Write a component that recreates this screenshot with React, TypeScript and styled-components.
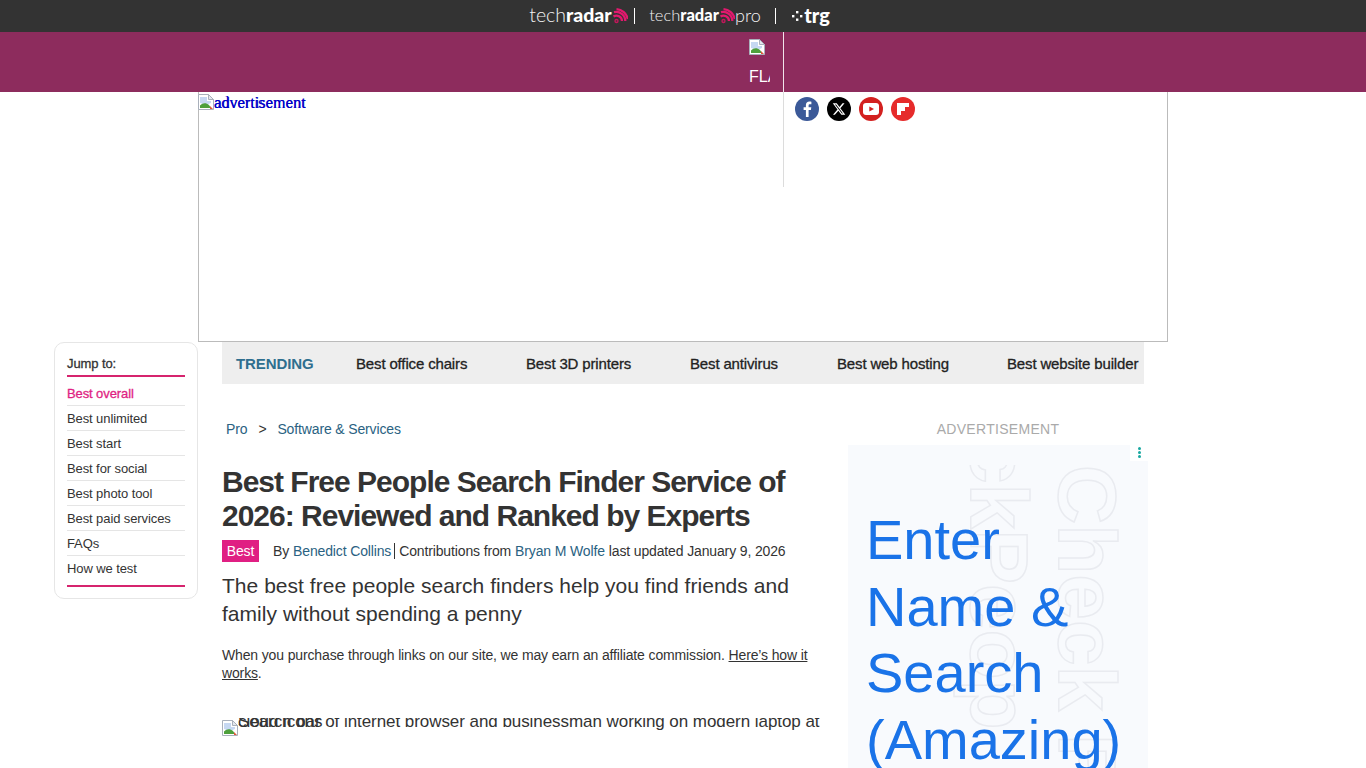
import React from 'react';
import styled, { createGlobalStyle } from 'styled-components';

const GlobalStyle = createGlobalStyle`
	html, body {
		margin: 0;
		padding: 0;
		height: 768px;
		overflow: hidden;
		background: #fff;
		font-family: 'Liberation Sans', Arial, sans-serif;
	}
	* {
		box-sizing: border-box;
	}
`;

const NetworkBar = styled.div`
	height: 32px;
	background: #333;
	display: flex;
	align-items: center;
	justify-content: center;
	padding-left: 8px;
`;

const NetworkItem = styled.div<{ $divider?: boolean; $width: number; $pad?: number }>`
	width: ${(p) => p.$width}px;
	height: 16px;
	display: flex;
	align-items: center;
	justify-content: center;
	padding-right: ${(p) => p.$pad ?? 0}px;
	border-right: ${(p) => (p.$divider ? '1px solid #fff' : 'none')};
	color: #fff;
`;

const LogoWord = styled.span<{ $size: number }>`
	font-family: Lato, 'Open Sans', sans-serif;
	font-size: ${(p) => p.$size}px;
	font-weight: 300;
	line-height: 14px;
	padding-bottom: 2px;
	color: #f4f4f4;
`;

const LogoBold = styled.b`
	font-weight: 900;
	color: #fff;
`;

const BrandBar = styled.div`
	height: 60px;
	background: #8d2c5d;
	display: flex;
	justify-content: flex-start;
	padding-left: 749px;
`;

const BrandMark = styled.div`
	width: 21px;
	overflow: hidden;
	padding-top: 7px;
	color: #fff;
	font-size: 16px;
	line-height: 18px;
	white-space: nowrap;
`;

const BrandAlt = styled.div`
	margin-top: 9px;
`;

const AdBox = styled.div`
	position: relative;
	width: 970px;
	height: 250px;
	margin-left: 198px;
	border: 1px solid #bbb;
	border-top: none;
`;

const AdAlt = styled.div`
	position: absolute;
	left: -1px;
	top: 2px;
	display: flex;
	font-family: 'Liberation Serif', serif;
	font-size: 16px;
	line-height: 18px;
	color: #0000c8;
`;

const AdAltGhost = styled.span<{ $sans?: boolean }>`
	position: absolute;
	left: 16px;
	top: 0;
	font-family: ${(p) => (p.$sans ? "'Liberation Sans', sans-serif" : 'inherit')};
	font-size: ${(p) => (p.$sans ? 14 : 16)}px;
	letter-spacing: ${(p) => (p.$sans ? 0.3 : 0.15)}px;
`;

const MenuDivider = styled.div`
	position: absolute;
	left: 584px;
	top: -60px;
	width: 1px;
	height: 155px;
	background: linear-gradient(#f1e4ea 0 60px, #dcdcdc 60px);
`;

const SocialRow = styled.div`
	position: absolute;
	left: 596px;
	top: 5px;
	display: flex;
	gap: 8px;
`;

const SocialLink = styled.a<{ $bg: string }>`
	width: 24px;
	height: 24px;
	border-radius: 50%;
	background: ${(p) => p.$bg};
	display: flex;
	align-items: center;
	justify-content: center;
`;

const PageRow = styled.div`
	display: flex;
	gap: 24px;
	margin-left: 54px;
	align-items: flex-start;
`;

const JumpCard = styled.nav`
	width: 144px;
	height: 257px;
	flex: none;
	border: 1px solid #e6e6e6;
	border-radius: 10px;
	padding: 12px 12px 0;
	font-size: 13px;
	letter-spacing: -0.1px;
	color: #333;
`;

const JumpTitle = styled.div`
	height: 22px;
	line-height: 18px;
	-webkit-text-stroke: 0.3px #333;
	border-bottom: 2px solid #d6246e;
`;

const JumpItem = styled.a<{ $active?: boolean; $last?: boolean }>`
	display: block;
	height: ${(p) => (p.$last ? 29 : 25)}px;
	line-height: 26px;
	color: ${(p) => (p.$active ? '#e01f83' : '#333')};
	-webkit-text-stroke: ${(p) => (p.$active ? '0.3px #e01f83' : '0')};
	border-bottom: ${(p) => (p.$last ? 'none' : '1px solid #e5e5e5')};
	&:first-of-type {
		height: 29px;
		padding-top: 4px;
	}
`;

const JumpFoot = styled.div`
	height: 2px;
	background: #d6246e;
`;

const Content = styled.div`
	width: 926px;
	flex: none;
`;

const Trending = styled.div`
	width: 922px;
	height: 42px;
	background: #eee;
	display: flex;
	align-items: center;
	padding: 1px 0 0 14px;
	font-size: 15px;
	white-space: nowrap;
	overflow: hidden;
`;

const TrendingLabel = styled.span`
	width: 120px;
	flex: none;
	font-weight: 700;
	letter-spacing: -0.1px;
	color: #2f6f8f;
`;

const TrendingLink = styled.a<{ $width: number }>`
	width: ${(p) => p.$width}px;
	flex: none;
	color: #222;
	letter-spacing: -0.15px;
	-webkit-text-stroke: 0.3px #222;
`;

const Columns = styled.div`
	display: flex;
	gap: 28px;
	padding-top: 36px;
`;

const Article = styled.article`
	width: 598px;
	flex: none;
	color: #333;
`;

const Crumbs = styled.div`
	display: flex;
	gap: 11px;
	padding-left: 4px;
	font-size: 14px;
	line-height: 18px;
	letter-spacing: -0.14px;
`;

const CrumbLink = styled.a`
	color: #2a6282;
`;

const Title = styled.h1`
	margin: 27px 0 0;
	font-size: 30px;
	line-height: 34px;
	font-weight: 700;
	letter-spacing: -1px;
	color: #333;
`;

const Byline = styled.div`
	display: flex;
	align-items: center;
	margin-top: 7px;
	height: 22px;
	font-size: 14px;
	letter-spacing: -0.14px;
	white-space: nowrap;
`;

const Badge = styled.span`
	width: 37px;
	height: 22px;
	background: #e01f83;
	color: #fff;
	text-align: center;
	line-height: 22px;
	margin-right: 14px;
`;

const AuthorLink = styled.a`
	color: #2a6282;
	margin-left: 4px;
`;

const Contrib = styled.span`
	margin-left: 3px;
	padding-left: 4px;
	border-left: 1px solid #333;
	line-height: 16px;
`;

const Updated = styled.span`
	margin-left: 4px;
`;

const Strapline = styled.p`
	margin: 10px 0 0;
	font-size: 21px;
	line-height: 28px;
	letter-spacing: 0.03px;
	color: #333;
`;

const Affiliate = styled.p`
	margin: 18px 0 0;
	font-size: 14px;
	line-height: 18px;
	letter-spacing: -0.14px;
	color: #333;
`;

const AffiliateLink = styled.a`
	color: #333;
	text-decoration: underline;
`;

const Hero = styled.div`
	position: relative;
	height: 50px;
	margin-top: 36px;
	padding-top: 2px;
	font-size: 17px;
	line-height: 20px;
	letter-spacing: -0.06px;
	white-space: nowrap;
	overflow: hidden;
`;

const HeroAlt = styled.span`
	position: absolute;
	left: 16px;
	top: -6px;
`;

const Aside = styled.aside`
	width: 300px;
	flex: none;
`;

const AdLabel = styled.div`
	height: 16px;
	margin-top: 1px;
	line-height: 16px;
	text-align: center;
	font-size: 14px;
	letter-spacing: 0.3px;
	color: #aaa;
`;

const SideAd = styled.div`
	position: relative;
	height: 323px;
	margin-top: 8px;
	background: #f8fafd;
	overflow: hidden;
	padding: 62px 0 0 18px;
`;

const AdMenu = styled.div`
	position: absolute;
	right: 0;
	top: 0;
	width: 18px;
	height: 16px;
	padding-bottom: 2px;
	background: #fff;
	display: flex;
	flex-direction: column;
	align-items: center;
	justify-content: center;
	gap: 1px;
`;

const AdMenuDot = styled.i`
	width: 3px;
	height: 3px;
	border-radius: 50%;
	background: #17a8a0;
`;

const GhostLayer = styled.div`
	position: absolute;
	inset: 20px 0 0;
	overflow: hidden;
`;

const GhostText = styled.div<{ $left: number; $top: number }>`
	position: absolute;
	left: ${(p) => p.$left}px;
	top: ${(p) => p.$top}px;
	transform-origin: 0 0;
	transform: rotate(90deg);
	font-size: 82px;
	line-height: 82px;
	font-weight: 700;
	white-space: nowrap;
	color: transparent;
	-webkit-text-stroke: 1.5px #e9ebf0;
`;

const AdHeadline = styled.div`
	position: relative;
	font-size: 56px;
	line-height: 66.5px;
	color: #1a73e8;
	width: 270px;
`;

const BrokenImage: React.FC = () => (
	<svg width="16" height="16" viewBox="0 0 16 16" style={{ flex: 'none' }}>
		<path d="M0.5 0.5H10.5L15.5 5.5V15.5H0.5Z" fill="#fff" stroke="#a9b0bb" />
		<path d="M10.5 0.5V5.5H15.5Z" fill="#e4e8ee" stroke="#a9b0bb" />
		<path d="M2 3H9V7H13V9L8 11L2 9Z" fill="#c6d8f2" />
		<path d="M2 14V11.5C5 8.5 8 8.5 11 11L13 14Z" fill="#4ea03c" />
		<path d="M12 12L15 15H12Z" fill="#dd5a3c" />
	</svg>
);

const Arcs: React.FC<{ size: number }> = ({ size }) => (
	<svg width={size} height={size} viewBox="0 0 16 16" fill="none" stroke="#e2196e" strokeWidth="2.3" style={{ flex: 'none' }}>
		<circle cx="4.500" cy="13" r="1.500" strokeWidth="1.400" stroke="#c2185b" />
		<path d="M1.500 8.500A5.500 5.500 0 0 1 10 13" />
		<path d="M2 4.200A9 9 0 0 1 13.300 13" />
		<path d="M4.500 1.200A12.500 12.500 0 0 1 15.800 11" />
	</svg>
);

const jumpLinks = [
	'Best overall',
	'Best unlimited',
	'Best start',
	'Best for social',
	'Best photo tool',
	'Best paid services',
	'FAQs',
	'How we test',
];

const trending = [
	{ label: 'Best office chairs', width: 170 },
	{ label: 'Best 3D printers', width: 164 },
	{ label: 'Best antivirus', width: 147 },
	{ label: 'Best web hosting', width: 170 },
	{ label: 'Best website builder', width: 150 },
];

const App: React.FC = () => (
	<>
		<GlobalStyle />
		<NetworkBar>
			<NetworkItem $width={107} $divider $pad={5}>
				<LogoWord $size={19.5}>
					tech<LogoBold>radar</LogoBold>
				</LogoWord>
				<Arcs size={16} />
			</NetworkItem>
			<NetworkItem $width={141} $divider>
				<LogoWord $size={16.5}>
					tech<LogoBold>radar</LogoBold>
				</LogoWord>
				<Arcs size={16} />
				<LogoWord $size={18}>pro</LogoWord>
			</NetworkItem>
			<NetworkItem $width={70}>
				<svg width="12" height="10" viewBox="0 0 12 10" fill="#fff">
					<rect x="0" y="4" width="2.400" height="2.400" />
					<rect x="4" y="0" width="2.400" height="2.400" />
					<rect x="8" y="4" width="2.400" height="2.400" />
					<rect x="4" y="7.500" width="2.400" height="2.400" />
				</svg>
				<LogoWord $size={20}>
					<LogoBold>trg</LogoBold>
				</LogoWord>
			</NetworkItem>
		</NetworkBar>
		<BrandBar>
			<BrandMark>
				<BrokenImage />
				<BrandAlt>FLAG</BrandAlt>
			</BrandMark>
		</BrandBar>
		<AdBox>
			<AdAlt>
				<BrokenImage />
				<AdAltGhost>advertisement</AdAltGhost>
				<AdAltGhost $sans>advertisement</AdAltGhost>
			</AdAlt>
			<MenuDivider />
			<SocialRow>
				<SocialLink $bg="#3b5998">
					<svg width="14" height="16" viewBox="0 0 14 16" fill="#fff">
						<path d="M8.600 16V9h2.300l.4-2.800H8.600V4.500c0-.8.3-1.300 1.400-1.300h1.400V.7C11.100.6 10.300.5 9.400.5 7.300.5 5.900 1.800 5.900 4.100v2.100H3.600V9h2.300v7z" />
					</svg>
				</SocialLink>
				<SocialLink $bg="#000">
					<svg width="14" height="14" viewBox="0 0 24 24" fill="#fff">
						<path d="M18.200 2.300h3.300l-7.200 8.200 8.500 11.200h-6.700l-5.200-6.800-6 6.800H1.700l7.700-8.800L1.300 2.300h6.800l4.700 6.200zm-1.200 17.500h1.800L7 4.100H5z" />
					</svg>
				</SocialLink>
				<SocialLink $bg="#d3201f">
					<svg width="16" height="12" viewBox="0 0 16 12">
						<rect width="16" height="12" rx="3" fill="#fff" />
						<path d="M6.300 3.400L11 6 6.300 8.600z" fill="#d3201f" />
					</svg>
				</SocialLink>
				<SocialLink $bg="#e62b2b">
					<svg width="12" height="12" viewBox="0 0 12 12" fill="#fff">
						<path d="M0 0H12V4H8V8H4V12H0Z" />
					</svg>
				</SocialLink>
			</SocialRow>
		</AdBox>
		<PageRow>
			<JumpCard>
				<JumpTitle>Jump to:</JumpTitle>
				{jumpLinks.map((link, i) => (
					<JumpItem key={link} $active={i === 0} $last={i === jumpLinks.length - 1}>
						{link}
					</JumpItem>
				))}
				<JumpFoot />
			</JumpCard>
			<Content>
				<Trending>
					<TrendingLabel>TRENDING</TrendingLabel>
					{trending.map((item) => (
						<TrendingLink key={item.label} $width={item.width}>
							{item.label}
						</TrendingLink>
					))}
				</Trending>
				<Columns>
					<Article>
						<Crumbs>
							<CrumbLink>Pro</CrumbLink>
							<span>&gt;</span>
							<CrumbLink>Software &amp; Services</CrumbLink>
						</Crumbs>
						<Title>Best Free People Search Finder Service of 2026: Reviewed and Ranked by Experts</Title>
						<Byline>
							<Badge>Best</Badge>
							By
							<AuthorLink>Benedict Collins</AuthorLink>
							<Contrib>Contributions from</Contrib>
							<AuthorLink>Bryan M Wolfe</AuthorLink>
							<Updated>last updated January 9, 2026</Updated>
						</Byline>
						<Strapline>The best free people search finders help you find friends and family without spending a penny</Strapline>
						<Affiliate>
							When you purchase through links on our site, we may earn an affiliate commission.{' '}
							<AffiliateLink>Here’s how it works</AffiliateLink>.
						</Affiliate>
						<Hero>
							<BrokenImage />
							<HeroAlt>Search bar of internet browser and businessman working on modern laptop at</HeroAlt>
							<HeroAlt>cloud icons</HeroAlt>
						</Hero>
					</Article>
					<Aside>
						<AdLabel>ADVERTISEMENT</AdLabel>
						<SideAd>
							<GhostLayer>
								<GhostText $left={280} $top={0}>Check People</GhostText>
								<GhostText $left={192} $top={-27}>ckPeop</GhostText>
							</GhostLayer>
							<AdMenu>
								<AdMenuDot />
								<AdMenuDot />
								<AdMenuDot />
							</AdMenu>
							<AdHeadline>
								Enter
								<br />
								Name &amp;
								<br />
								Search
								<br />
								(Amazing)
							</AdHeadline>
						</SideAd>
					</Aside>
				</Columns>
			</Content>
		</PageRow>
	</>
);

export default App;
